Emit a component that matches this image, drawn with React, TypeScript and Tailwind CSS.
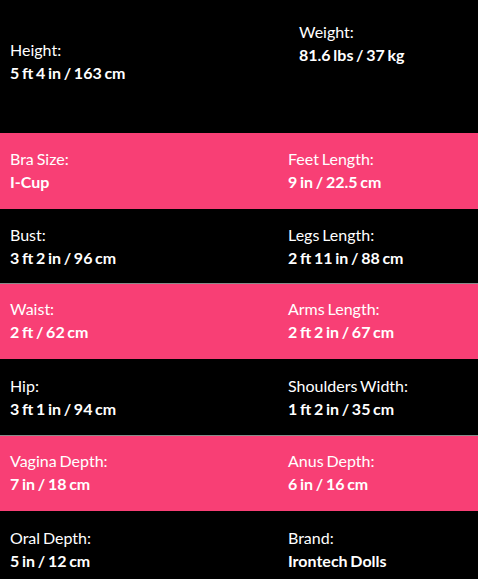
import React from "react";

type Cell = { label: string; value: string };
type Row = { left: Cell; right: Cell; pink: boolean; h: string; border?: boolean };

const rows: Row[] = [
  { left: { label: "Bra Size:", value: "I-Cup" }, right: { label: "Feet Length:", value: "9 in / 22.5 cm" }, pink: true, h: "h-[76px]" },
  { left: { label: "Bust:", value: "3 ft 2 in / 96 cm" }, right: { label: "Legs Length:", value: "2 ft 11 in / 88 cm" }, pink: false, h: "h-[75px]", border: true },
  { left: { label: "Waist:", value: "2 ft / 62 cm" }, right: { label: "Arms Length:", value: "2 ft 2 in / 67 cm" }, pink: true, h: "h-[75px]" },
  { left: { label: "Hip:", value: "3 ft 1 in / 94 cm" }, right: { label: "Shoulders Width:", value: "1 ft 2 in / 35 cm" }, pink: false, h: "h-[77px]", border: true },
  { left: { label: "Vagina Depth:", value: "7 in / 18 cm" }, right: { label: "Anus Depth:", value: "6 in / 16 cm" }, pink: true, h: "h-[75px]" },
  { left: { label: "Oral Depth:", value: "5 in / 12 cm" }, right: { label: "Brand:", value: "Irontech Dolls" }, pink: false, h: "h-[76px]" },
];

function Item({ c }: { c: Cell }) {
  return (
    <div className="leading-[23px] text-[16px] text-white [word-spacing:-1.2px]">
      <div className="font-normal">{c.label}</div>
      <div className="font-bold">{c.value}</div>
    </div>
  );
}

export default function App() {
  return (
    <div className="w-[478px] bg-black" style={{ fontFamily: "Lato, 'Open Sans', sans-serif" }}>
      <div className="grid h-[133px] grid-cols-[278px_1fr] bg-black">
        <div className="pl-[10px] pt-[38px]">
          <Item c={{ label: "Height:", value: "5 ft 4 in / 163 cm" }} />
        </div>
        <div className="pl-[21px] pt-[20px]">
          <Item c={{ label: "Weight:", value: "81.6 lbs / 37 kg" }} />
        </div>
      </div>
      {rows.map((r, i) => (
        <div
          key={i}
          className={`grid grid-cols-[278px_1fr] items-center ${r.h} ${r.pink ? "bg-[#f83f75]" : "bg-black"} ${r.border ? "border-b border-[#8a8a8a]" : ""}`}
        >
          <div className={`pl-[10px] ${r.pink ? "pb-[3px]" : "pb-[1px]"}`}>
            <Item c={r.left} />
          </div>
          <div className={`pl-[10px] ${r.pink ? "pb-[3px]" : "pb-[1px]"}`}>
            <Item c={r.right} />
          </div>
        </div>
      ))}
    </div>
  );
}
